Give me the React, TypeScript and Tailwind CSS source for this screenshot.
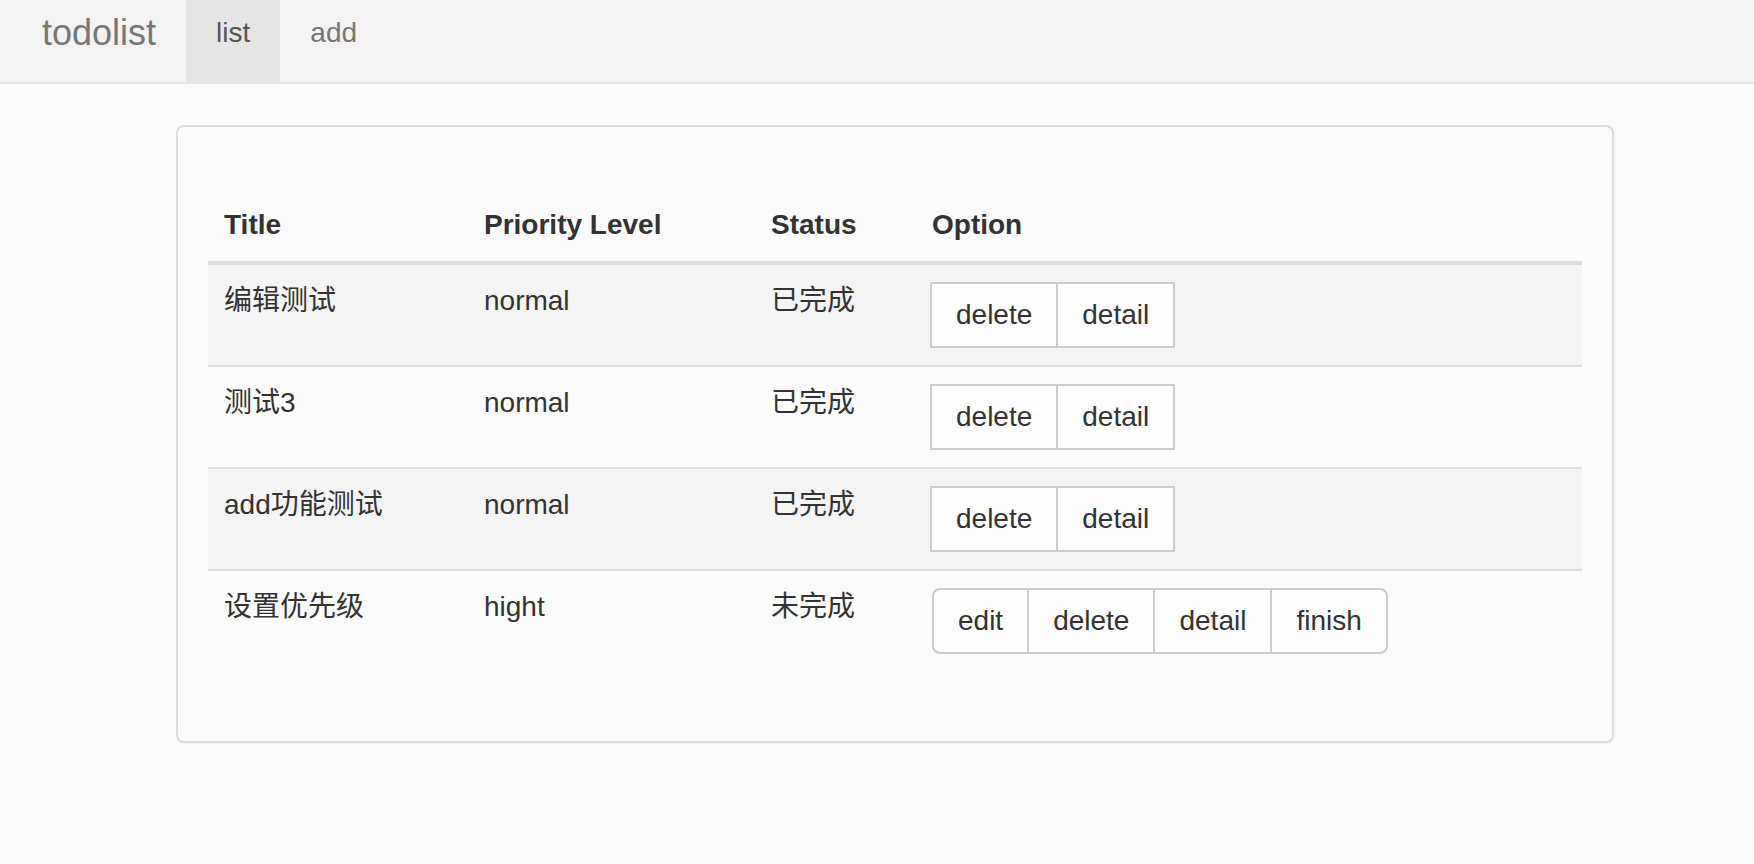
import React from "react";

type Row = { title: string; level: string; status: string; actions: string[]; rounded: boolean };

const rows: Row[] = [
  { title: "编辑测试", level: "normal", status: "已完成", actions: ["delete", "detail"], rounded: false },
  { title: "测试3", level: "normal", status: "已完成", actions: ["delete", "detail"], rounded: false },
  { title: "add功能测试", level: "normal", status: "已完成", actions: ["delete", "detail"], rounded: false },
  { title: "设置优先级", level: "hight", status: "未完成", actions: ["edit", "delete", "detail", "finish"], rounded: true },
];

function BtnGroup({ actions, rounded }: { actions: string[]; rounded: boolean }) {
  return (
    <div className={rounded ? "mt-[1px] inline-flex" : "-ml-[2px] mt-[1px] inline-flex"}>
      {actions.map((a, i) => {
        const first = i === 0;
        const last = i === actions.length - 1;
        let cls =
          "border-2 border-[#cccccc] bg-[#fdfdfd] px-[24px] py-[11px] text-[28px] leading-[40px] text-[#333333]";
        if (!first) cls += " -ml-[2px]";
        if (rounded && first) cls += " rounded-l-[8px]";
        if (rounded && last) cls += " rounded-r-[8px]";
        return (
          <button key={a} className={cls}>
            {a}
          </button>
        );
      })}
    </div>
  );
}

export default function App() {
  return (
    <div className="min-h-[864px] bg-[#fafafa] font-['Liberation_Sans','Noto_Sans_CJK_SC',sans-serif] text-[#333333]">
      <nav className="flex h-[84px] border-b-2 border-[#e6e6e6] bg-[#f3f3f3]">
        <div className="pl-[42px] pr-[30px] pt-[12px] text-[36px] leading-[41px] text-[#777777]">todolist</div>
        <div className="bg-[#e5e5e6] px-[30px] pt-[17px] text-[28px] leading-[32px] text-[#555555]">list</div>
        <div className="px-[30px] pt-[17px] text-[28px] leading-[32px] text-[#777777]">add</div>
      </nav>

      <div className="ml-[176px] mt-[41px] w-[1438px] rounded-[8px] border-2 border-[#dddddd] bg-[#fbfbfb] px-[30px] pb-[30px] pt-[62px] shadow-[0_1px_1px_rgba(0,0,0,0.05)]">
        <table className="mb-[40px] w-full table-fixed border-collapse text-[28px] leading-[40px]">
          <colgroup>
            <col className="w-[260px]" />
            <col className="w-[287px]" />
            <col className="w-[161px]" />
            <col />
          </colgroup>
          <thead>
            <tr>
              <th className="border-b-4 border-[#dddddd] p-[16px] text-left font-bold">Title</th>
              <th className="border-b-4 border-[#dddddd] p-[16px] text-left font-bold">Priority Level</th>
              <th className="border-b-4 border-[#dddddd] p-[16px] text-left font-bold">Status</th>
              <th className="border-b-4 border-[#dddddd] p-[16px] text-left font-bold">Option</th>
            </tr>
          </thead>
          <tbody>
            {rows.map((r, i) => {
              const bg = i % 2 === 0 ? "bg-[#f4f4f4]" : "";
              const bt = i === 0 ? "" : "border-t-2 border-[#dddddd]";
              const td = `px-[16px] pt-[16px] pb-[17px] align-top ${bt}`;
              return (
                <tr key={i} className={bg}>
                  <td className={td}>{r.title}</td>
                  <td className={td}>{r.level}</td>
                  <td className={td}>{r.status}</td>
                  <td className={td}>
                    <BtnGroup actions={r.actions} rounded={r.rounded} />
                  </td>
                </tr>
              );
            })}
          </tbody>
        </table>
      </div>
    </div>
  );
}
